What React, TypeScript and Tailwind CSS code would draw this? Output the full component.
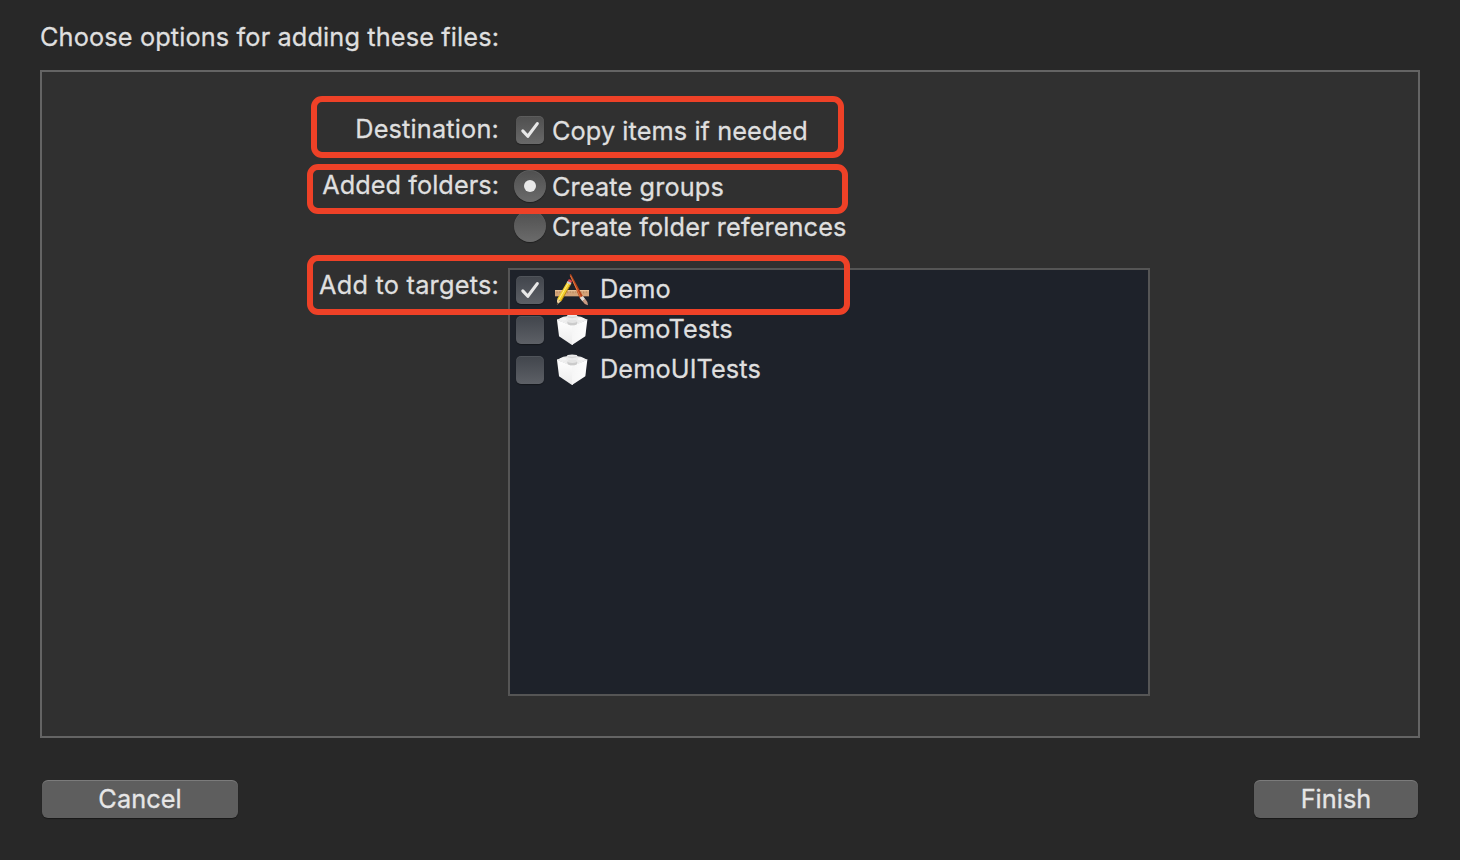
import React from 'react';

function CheckBox({ checked = false, blue = false }: { checked?: boolean; blue?: boolean }) {
  return (
    <span
      className={
        'flex h-7 w-7 shrink-0 items-center justify-center rounded-[5px] bg-linear-to-b shadow-[0_1px_1px_rgba(0,0,0,0.35),inset_0_1px_0_rgba(255,255,255,0.08)] ' +
        (blue ? 'from-[#41454c] to-[#5d6066]' : 'from-[#4f4f4f] to-[#696969]')
      }
    >
      {checked && (
        <svg width="28" height="28" viewBox="0 0 28 28" fill="none">
          <path d="M6.8 14.9 L11.8 20.3 L21.3 7.6" stroke="#e8e8e8" strokeWidth="3.1" strokeLinecap="round" strokeLinejoin="round" />
        </svg>
      )}
    </span>
  );
}

function Radio({ checked = false }: { checked?: boolean }) {
  return (
    <span className="flex h-8 w-8 shrink-0 items-center justify-center rounded-full bg-linear-to-b from-[#4f4f4f] to-[#6b6b6b] shadow-[0_1px_1px_rgba(0,0,0,0.35),inset_0_1px_0_rgba(255,255,255,0.08)]">
      {checked && <span className="h-3 w-3 rounded-full bg-[#e8e8e8]" />}
    </span>
  );
}

function AppIcon() {
  return (
    <svg className="shrink-0" width="34" height="34" viewBox="165 54 102 102">
      <rect x="165" y="105" width="102" height="19" fill="#d3a378" />
      <rect x="165" y="105" width="102" height="4" fill="#e8c096" />
      <path d="M171 109v6M179 109v4M187 109v6M195 109v4M203 109v6M211 109v4M219 109v6M227 109v4M235 109v6M243 109v4M251 109v6M259 109v4" stroke="#a87a50" strokeWidth="2" />
      <path d="M209 58 L213 58 L250 126 L240 131 Z" fill="#b5431b" />
      <path d="M211 62 L243 129" stroke="#e57a42" strokeWidth="3" />
      <path d="M239 128 L249 123 L256 133 L247 139 Z" fill="#e3dcd4" />
      <path d="M247 138 L256 132 Q264 140 264 151 Q252 148 247 138Z" fill="#c99a83" />
      <path d="M203 78 L214 84 L183 139 L171 133 Z" fill="#f4cf2d" />
      <path d="M206 82 L175 136" stroke="#fff08a" strokeWidth="3" />
      <path d="M213 86 L183 139" stroke="#b88712" strokeWidth="3" />
      <path d="M206 73 Q212 72 216 78 L214 84 L203 79Z" fill="#e2454f" />
      <path d="M203 79 L214 84 L211 89 L200 83Z" fill="#c9ccd2" />
      <path d="M171 133 L183 139 L171 149 Z" fill="#ecd09b" />
      <path d="M171 142 L175 145 L170 151 Z" fill="#4a4034" />
    </svg>
  );
}

function BrickIcon({ id }: { id: string }) {
  return (
    <svg className="shrink-0" width="34" height="34" viewBox="165 129 102 102">
      <defs>
        <linearGradient id={id + 'l'} x1="0" y1="0" x2="0" y2="1">
          <stop offset="0" stopColor="#ffffff" />
          <stop offset="1" stopColor="#ebebeb" />
        </linearGradient>
        <linearGradient id={id + 'r'} x1="0" y1="0" x2="1" y2="0">
          <stop offset="0" stopColor="#f6f6f6" />
          <stop offset="1" stopColor="#fdfdfd" />
        </linearGradient>
      </defs>
      <path d="M171 149 L218 168 L218 225 L216 225 L177 199 Z" fill={'url(#' + id + 'l)'} />
      <path d="M262 149 L216 168 L216 225 L256 199 Z" fill={'url(#' + id + 'r)'} />
      <path d="M171 149 L190 140 L200 139 L203 135 Q216 132 230 135 L233 139 L243 140 L262 149 L217 169 Z" fill="#ececec" />
      <path d="M171 149 L217 168 L262 149" fill="none" stroke="#ffffff" strokeWidth="2" />
      <path d="M203 138 Q216 143 230 138 L230 142 Q216 147 203 142Z" fill="#d6d6d6" />
      <ellipse cx="217" cy="158" rx="15" ry="8" fill="#cbcbcb" />
      <ellipse cx="217" cy="154" rx="14" ry="5" fill="#e4e4e4" />
      <ellipse cx="190" cy="147" rx="10" ry="4" fill="#f6f6f6" />
      <ellipse cx="243" cy="147" rx="10" ry="4" fill="#f6f6f6" />
    </svg>
  );
}

function Target({ name, icon, checked, spacing }: { name: string; icon: React.ReactNode; checked?: boolean; spacing: string }) {
  return (
    <div className="flex h-10 items-center pl-[6px]">
      <CheckBox checked={checked} blue />
      <span className="ml-[11px] flex">{icon}</span>
      <span className={'ml-[11px] pb-[2px] ' + spacing}>{name}</span>
    </div>
  );
}

const label = 'w-[457px] mr-px shrink-0 pt-1 text-right ';
const button =
  'flex h-[38px] items-center justify-center rounded-[6px] bg-[#5e5e5e] shadow-[0_1px_1px_rgba(0,0,0,0.4),inset_0_1px_0_rgba(255,255,255,0.18)] ';

export default function App() {
  return (
    <div className="relative flex h-[860px] w-[1460px] flex-col overflow-hidden bg-[#282828] px-10 pt-[22px] font-['Inter','Liberation_Sans',sans-serif] text-[25.3px] leading-[30px] whitespace-nowrap text-[#dfdfdf] [-webkit-text-stroke:0.3px]">
      <h1 className="tracking-[0.13px]">Choose options for adding these files:</h1>
      <main className="mt-[18px] h-[668px] border-2 border-[#646464] bg-[#303030] pt-[38px]">
        <div className="flex h-10">
          <div className={label + 'tracking-[0.17px]'}>Destination:</div>
          <div className="ml-4 flex items-center">
            <CheckBox checked />
            <span className="ml-2 pt-[2px] tracking-[0.08px]">Copy items if needed</span>
          </div>
        </div>
        <div className="mt-4 flex">
          <div className={label + 'tracking-[0.05px]'}>Added folders:</div>
          <div className="ml-[14px]">
            <div className="flex h-10 items-center">
              <Radio checked />
              <span className="ml-[6px] pt-[2px] tracking-[0.13px]">Create groups</span>
            </div>
            <div className="flex h-10 items-center">
              <Radio />
              <span className="ml-[6px] pt-[2px] tracking-[0.1px]">Create folder references</span>
            </div>
          </div>
        </div>
        <div className="mt-5 flex">
          <div className={label + 'tracking-[0.23px]'}>Add to targets:</div>
          <div className="ml-2 mt-[2px] h-[428px] w-[642px] border-2 border-[#555555] bg-[#1e222a]">
            <Target name="Demo" icon={<AppIcon />} checked spacing="tracking-[0.1px]" />
            <Target name="DemoTests" icon={<BrickIcon id="a" />} spacing="tracking-[0.05px]" />
            <Target name="DemoUITests" icon={<BrickIcon id="b" />} spacing="tracking-[0.1px]" />
          </div>
        </div>
      </main>
      <footer className="mt-[42px] flex justify-between px-[2px] text-[#e6e6e6]">
        <button className={button + 'w-[196px] tracking-[0.05px]'}>Cancel</button>
        <button className={button + 'w-[164px] tracking-[0.05px]'}>Finish</button>
      </footer>
      <div className="absolute top-[96px] left-[311px] h-[61.5px] w-[533px] rounded-[11px] border-6 border-[#ee4127]" />
      <div className="absolute top-[163.5px] left-[306.5px] h-[50.5px] w-[541px] rounded-[11px] border-6 border-[#ee4127]" />
      <div className="absolute top-[255px] left-[306.5px] h-[59.5px] w-[543.5px] rounded-[11px] border-6 border-[#ee4127]" />
    </div>
  );
}
